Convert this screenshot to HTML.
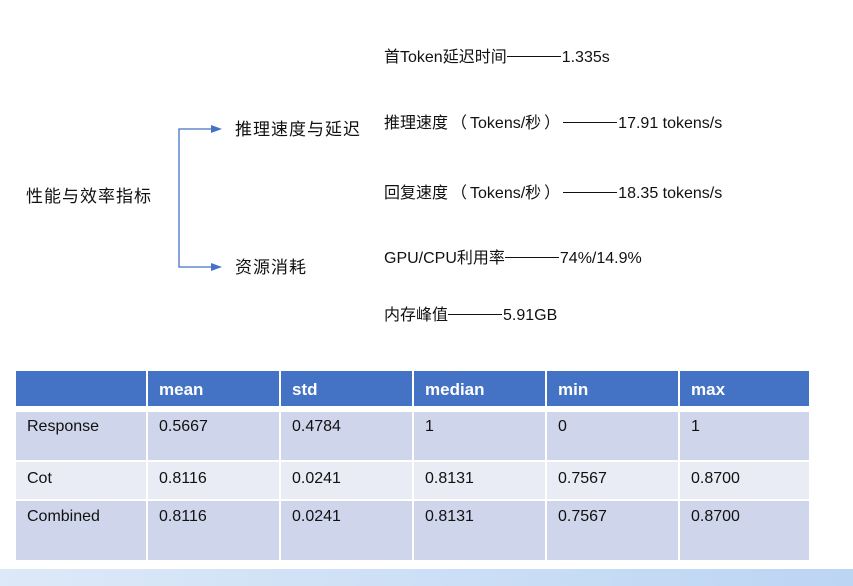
<!DOCTYPE html>
<html><head><meta charset="utf-8"><style>
body{margin:0;width:853px;height:586px;background:#fff;position:relative;overflow:hidden;font-family:"Liberation Sans","Noto Sans CJK SC",sans-serif;color:#111;}
.t{position:absolute;font-size:16px;white-space:nowrap;line-height:20px;}
.c{font-size:17px;letter-spacing:1px}
.d{display:inline-block;width:54px;height:1px;background:#111;vertical-align:middle;margin:0 1px 0 0;position:relative;top:-1px}
.p{display:inline-block;width:22px;text-align:center}
table{position:absolute;left:14px;top:369px;border-collapse:collapse;font-size:16px;}
td{border:2px solid #fff;padding:0 0 0 11px;vertical-align:top;box-sizing:border-box;}
tr.h td{background:#4472c4;color:#fff;font-weight:bold;height:37px;padding-top:9px;font-size:17px}
tr.a td{background:#cfd5ea;}
tr.b td{background:#e9ebf5;}
.band{position:absolute;left:0;top:569px;width:853px;height:17px;background:linear-gradient(90deg,#dde9f8,#bcd5f3);}
</style></head><body>
<div class="t" style="left:384px;top:48px">首Token延迟时间<span class="d"></span>1.335s</div>
<div class="t" style="left:384px;top:114px">推理速度<span class="p">（</span>Tokens/秒<span class="p">）</span><span class="d"></span>17.91 tokens/s</div>
<div class="t" style="left:384px;top:184px">回复速度<span class="p">（</span>Tokens/秒<span class="p">）</span><span class="d"></span>18.35 tokens/s</div>
<div class="t" style="left:384px;top:249px">GPU/CPU利用率<span class="d"></span>74%/14.9%</div>
<div class="t" style="left:384px;top:306px">内存峰值<span class="d"></span>5.91GB</div>
<div class="t c" style="left:26px;top:187px">性能与效率指标</div>
<div class="t c" style="left:235px;top:120px">推理速度与延迟</div>
<div class="t c" style="left:235px;top:258px">资源消耗</div>
<svg style="position:absolute;left:0;top:0" width="853" height="300">
<path d="M212 129H179V267H212" fill="none" stroke="#4472c4" stroke-width="1.3"/>
<path d="M211 125L222 129L211 133Z" fill="#4472c4"/>
<path d="M211 263L222 267L211 271Z" fill="#4472c4"/>
</svg>
<table>
<tr class="h"><td style="width:132px"></td><td style="width:133px">mean</td><td style="width:133px">std</td><td style="width:133px">median</td><td style="width:133px">min</td><td style="width:131px">max</td></tr>
<tr style="height:4px"><td colspan="6" style="padding:0;height:4px;border:0"></td></tr>
<tr class="a" style="height:50px"><td style="padding-top:6px">Response</td><td style="padding-top:6px">0.5667</td><td style="padding-top:6px">0.4784</td><td style="padding-top:6px">1</td><td style="padding-top:6px">0</td><td style="padding-top:6px">1</td></tr>
<tr class="b" style="height:39px"><td style="padding-top:8px">Cot</td><td style="padding-top:8px">0.8116</td><td style="padding-top:8px">0.0241</td><td style="padding-top:8px">0.8131</td><td style="padding-top:8px">0.7567</td><td style="padding-top:8px">0.8700</td></tr>
<tr class="a" style="height:61px"><td style="padding-top:7px">Combined</td><td style="padding-top:7px">0.8116</td><td style="padding-top:7px">0.0241</td><td style="padding-top:7px">0.8131</td><td style="padding-top:7px">0.7567</td><td style="padding-top:7px">0.8700</td></tr>
</table>
<div class="band"></div>
</body></html>
